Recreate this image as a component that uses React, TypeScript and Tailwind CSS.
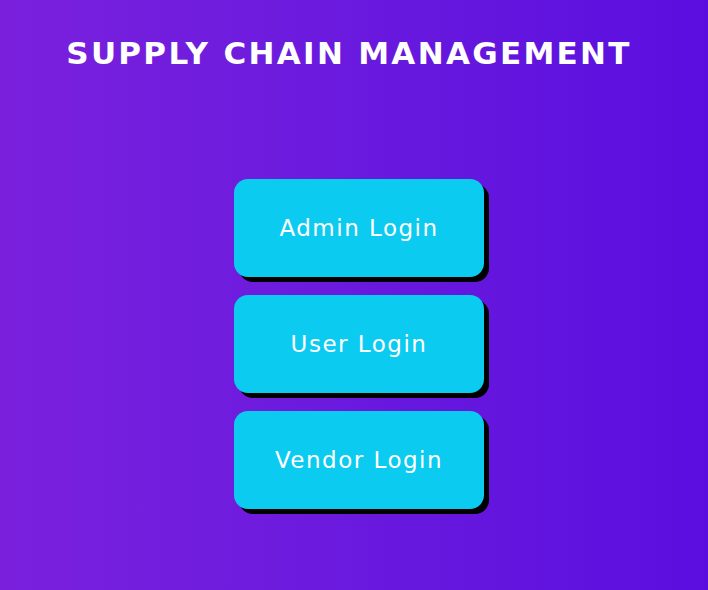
const logins = ["Admin Login", "User Login", "Vendor Login"];

export default function App() {
  return (
    <div
      className="min-h-screen w-full bg-gradient-to-r from-[#7a20dd] to-[#5a0ddf] text-white flex flex-col items-center"
      style={{ fontFamily: '"Comic Sans MS", "DejaVu Sans", sans-serif' }}
    >
      {/* Heading */}
      <h1 className="mt-[33px] text-[31px] leading-[40px] font-bold tracking-[2.3px] pr-[10px]">
        SUPPLY CHAIN MANAGEMENT
      </h1>

      {/* Login buttons */}
      <div className="mt-[106px] flex flex-col gap-[18px] pl-[10px]">
        {logins.map((label) => (
          <button
            key={label}
            className="w-[250px] h-[98px] rounded-[14px] bg-[#0ccbf0] shadow-[5px_5px_0_#000] text-[23px] tracking-[1.5px] text-white"
          >
            {label}
          </button>
        ))}
      </div>
    </div>
  );
}
